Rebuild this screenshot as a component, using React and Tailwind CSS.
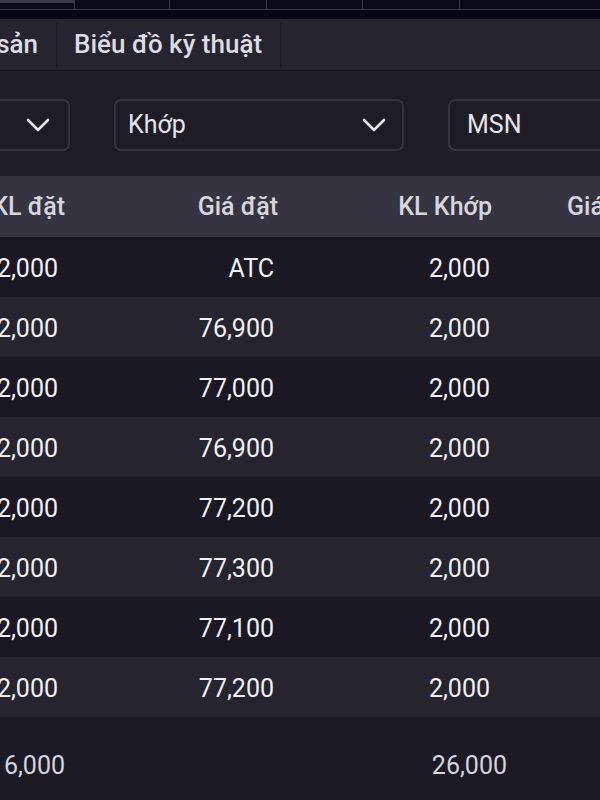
import React from 'react';

const ROWS = [
  { kl: '2,000', price: 'ATC', matched: '2,000' },
  { kl: '2,000', price: '76,900', matched: '2,000' },
  { kl: '2,000', price: '77,000', matched: '2,000' },
  { kl: '2,000', price: '76,900', matched: '2,000' },
  { kl: '2,000', price: '77,200', matched: '2,000' },
  { kl: '2,000', price: '77,300', matched: '2,000' },
  { kl: '2,000', price: '77,100', matched: '2,000' },
  { kl: '2,000', price: '77,200', matched: '2,000' },
];

const Chevron = () => (
  <svg width="24" height="14" viewBox="0 0 24 14" fill="none">
    <path d="M2 2l10 10L22 2" stroke="#e4e4ea" strokeWidth="2.6" strokeLinecap="round" strokeLinejoin="round" />
  </svg>
);

export default function App() {
  return (
    <div className="w-[600px] h-[800px] overflow-hidden bg-[#1d1b26] text-[#ececf1]" style={{ fontFamily: 'Roboto, "Liberation Sans", sans-serif' }}>
      {/* top strip */}
      <div className="flex h-[10px] bg-[#0b0a16] border-b border-[#383745]">
        <div className="w-[75px] border-r border-[#383745] flex flex-col">
          <div className="h-[3px] bg-[#3a3946]" />
        </div>
        <div className="w-[95px] border-r border-[#383745]" />
        <div className="w-[97px] border-r border-[#383745]" />
        <div className="w-[96px] border-r border-[#383745]" />
        <div className="w-[97px] border-r border-[#383745]" />
        <div className="flex-1" />
      </div>
      <div className="h-[9px] bg-[#070618]" />

      {/* tabs */}
      <div className="flex h-[51px] bg-[#26242e] items-stretch">
        <div className="w-[57px] flex items-center justify-end pr-[18px] border-r border-[#1c1a24] my-[3px] text-[26px] font-medium text-[#dcdce4] whitespace-nowrap">sản</div>
        <div className="w-[224px] flex items-center pl-[17px] border-r border-[#1c1a24] my-[3px] text-[26px] font-medium text-[#dcdce4] whitespace-nowrap">Biểu đồ kỹ thuật</div>
        <div className="flex-1" />
      </div>
      <div className="h-[1px] bg-[#1a1822]" />

      {/* filters */}
      <div className="h-[105px] flex items-center bg-[#1e1c27]">
        <div className="flex items-center -ml-[60px] gap-[44px] pt-[3px]">
          <div className="w-[130px] h-[52px] border-2 border-[#363442] rounded-[7px] flex items-center justify-end pr-[18px]">
            <Chevron />
          </div>
          <div className="w-[290px] h-[52px] border-2 border-[#363442] rounded-[7px] flex items-center justify-between pl-[12px] pr-[16px] text-[25px] text-[#e4e4ea]">
            <span>Khớp</span>
            <Chevron />
          </div>
          <div className="w-[200px] h-[52px] border-2 border-[#363442] rounded-[7px] flex items-center pl-[17px] text-[25px] text-[#e4e4ea]">
            MSN
          </div>
        </div>
      </div>

      {/* table */}
      <div className="-ml-[100px] w-[800px]">
        <div className="grid grid-cols-[165px_213px_214px_208px] h-[61px] items-center bg-[#363440] text-[25px] font-medium text-[#d6d6de]">
          <div className="text-right whitespace-nowrap">KL đặt</div>
          <div className="text-right whitespace-nowrap">Giá đặt</div>
          <div className="text-right whitespace-nowrap">KL Khớp</div>
          <div className="pl-[75px] whitespace-nowrap">Giá khớp</div>
        </div>
        {ROWS.map((r, i) => (
          <div
            key={i}
            className={
              'grid grid-cols-[165px_213px_214px_208px] h-[60px] items-center pt-[3px] text-[25px] text-[#f2f2f6] ' +
              (i % 2 === 0 ? 'bg-[#1a1822]' : 'bg-[#26242f]')
            }
          >
            <div className="text-right pr-[7px]">{r.kl}</div>
            <div className="text-right pr-[4px]">{r.price}</div>
            <div className="text-right pr-[2px]">{r.matched}</div>
            <div />
          </div>
        ))}
        <div className="grid grid-cols-[165px_213px_214px_208px] h-[100px] items-center text-[25px] text-[#d4d4dc] bg-[#1c1a25]">
          <div className="text-right pb-[3px]">16,000</div>
          <div />
          <div className="text-right -mr-[15px] pb-[3px]">26,000</div>
          <div />
        </div>
      </div>
    </div>
  );
}
